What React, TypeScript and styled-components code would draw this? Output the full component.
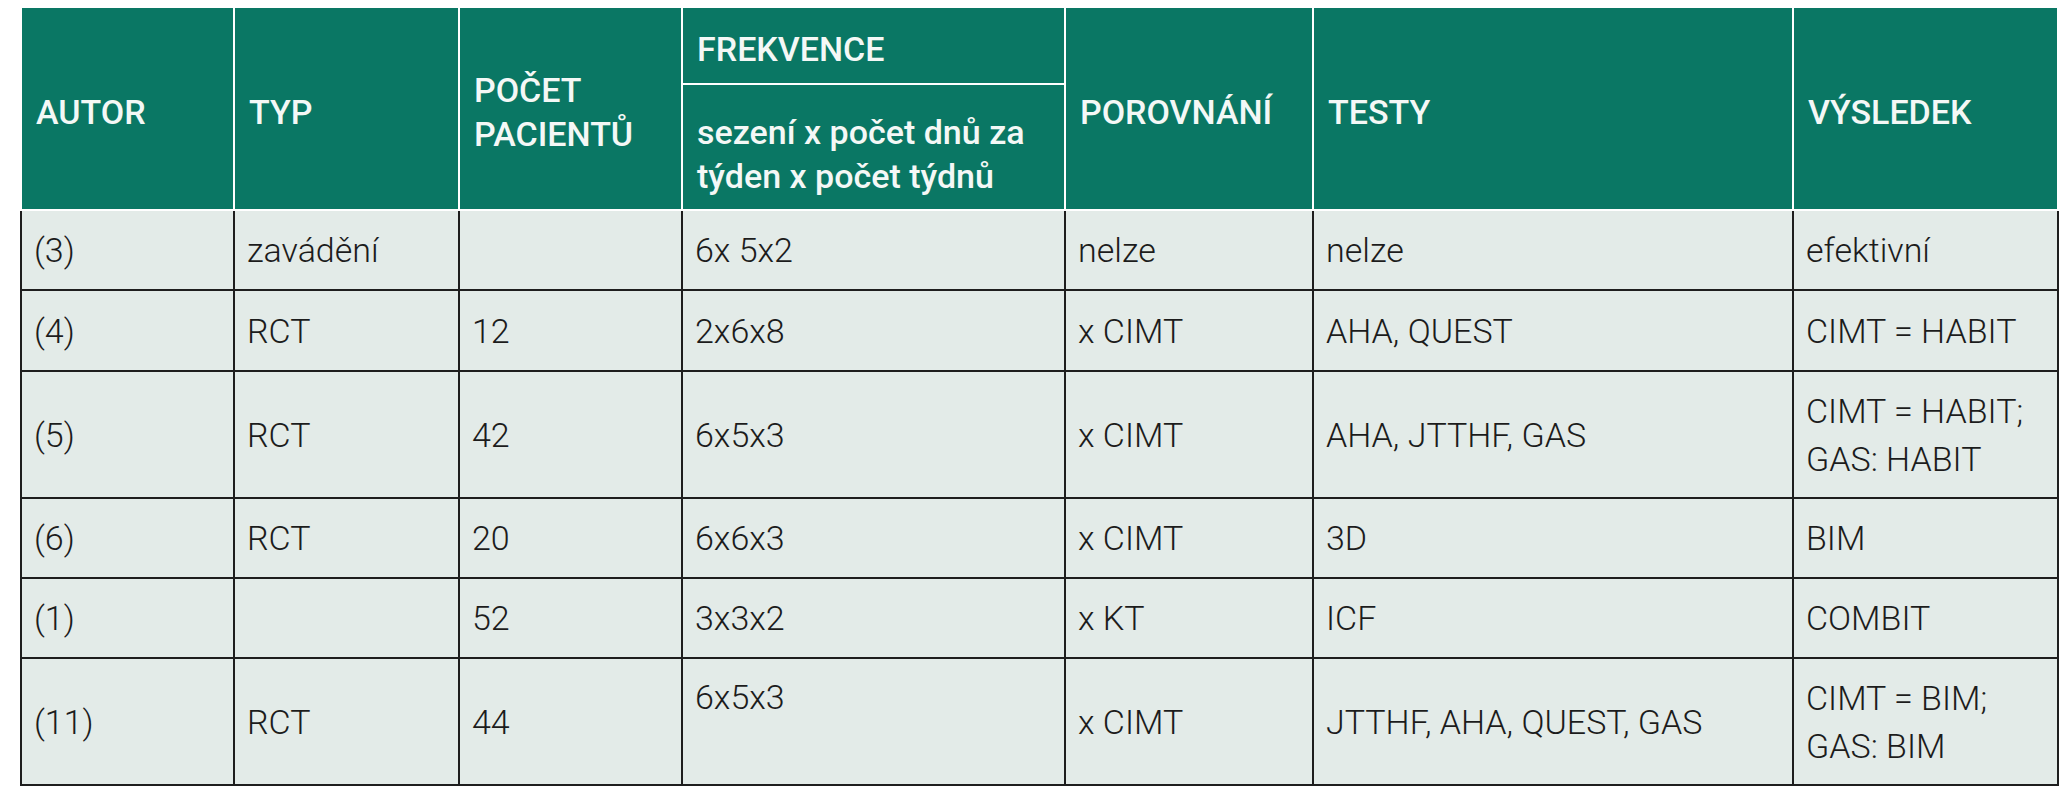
import React from 'react';
import styled, { createGlobalStyle } from 'styled-components';

const GlobalStyle = createGlobalStyle`
    html, body {
        margin: 0;
        padding: 0;
        background: #ffffff;
    }
    body {
        font-family: Roboto, "Noto Sans", "Liberation Sans", sans-serif;
    }
`;

const GREEN = '#0a7764';
const ROW_BG = '#e3ebe8';
const LINE = '#1e1e1e';

const Page = styled.div`
    padding: 6px 0 0 20px;
`;

const Table = styled.table`
    border-collapse: collapse;
    table-layout: fixed;
    width: 2038px;
`;

const HeadCell = styled.th<{ $h?: number }>`
    background: ${GREEN};
    color: #f4f8f6;
    border: 2px solid #ffffff;
    font-size: 34px;
    font-weight: 500;
    line-height: 44px;
    text-align: left;
    vertical-align: middle;
    padding: 6px 14px 0;
    height: ${(p) => p.$h ?? 0}px;
`;

const SubHeadCell = styled(HeadCell)`
    padding-top: 14px;
`;

const Row = styled.tr<{ $h: number }>`
    height: ${(p) => p.$h}px;
`;

const Cell = styled.td<{ $top?: boolean }>`
    background: ${ROW_BG};
    color: #1c1c1c;
    border: 2px solid ${LINE};
    font-size: 34px;
    font-weight: 300;
    line-height: 48px;
    text-align: left;
    vertical-align: ${(p) => (p.$top ? 'top' : 'middle')};
    padding: ${(p) => (p.$top ? '14px 12px 0' : '0 12px')};
`;

const COLUMNS = [213, 225, 223, 383, 248, 480, 265];

type RowData = {
    h: number;
    cells: React.ReactNode[];
    topFreq?: boolean;
};

const ROWS: RowData[] = [
    { h: 80, cells: ['(3)', 'zavádění', '', '6x 5x2', 'nelze', 'nelze', 'efektivní'] },
    { h: 81, cells: ['(4)', 'RCT', '12', '2x6x8', 'x CIMT', 'AHA, QUEST', 'CIMT = HABIT'] },
    {
        h: 127,
        cells: ['(5)', 'RCT', '42', '6x5x3', 'x CIMT', 'AHA, JTTHF, GAS', <>CIMT = HABIT;<br />GAS: HABIT</>],
    },
    { h: 80, cells: ['(6)', 'RCT', '20', '6x6x3', 'x CIMT', '3D', 'BIM'] },
    { h: 80, cells: ['(1)', '', '52', '3x3x2', 'x KT', 'ICF', 'COMBIT'] },
    {
        h: 127,
        topFreq: true,
        cells: ['(11)', 'RCT', '44', '6x5x3', 'x CIMT', 'JTTHF, AHA, QUEST, GAS', <>CIMT = BIM;<br />GAS: BIM</>],
    },
];

const App = () => {
    return (
        <>
            <GlobalStyle />
            <Page>
                <Table>
                    <colgroup>
                        {COLUMNS.map((w, i) => (
                            <col key={i} style={{ width: w }} />
                        ))}
                    </colgroup>
                    <thead>
                        <tr>
                            <HeadCell rowSpan={2}>AUTOR</HeadCell>
                            <HeadCell rowSpan={2}>TYP</HeadCell>
                            <HeadCell rowSpan={2}>
                                POČET
                                <br />
                                PACIENTŮ
                            </HeadCell>
                            <HeadCell $h={69}>FREKVENCE</HeadCell>
                            <HeadCell rowSpan={2}>POROVNÁNÍ</HeadCell>
                            <HeadCell rowSpan={2}>TESTY</HeadCell>
                            <HeadCell rowSpan={2}>VÝSLEDEK</HeadCell>
                        </tr>
                        <tr>
                            <SubHeadCell $h={110}>
                                sezení x počet dnů za
                                <br />
                                týden x počet týdnů
                            </SubHeadCell>
                        </tr>
                    </thead>
                    <tbody>
                        {ROWS.map((row, r) => (
                            <Row key={r} $h={row.h}>
                                {row.cells.map((c, i) => (
                                    <Cell key={i} $top={row.topFreq && i === 3}>
                                        {c}
                                    </Cell>
                                ))}
                            </Row>
                        ))}
                    </tbody>
                </Table>
            </Page>
        </>
    );
};

export default App;
